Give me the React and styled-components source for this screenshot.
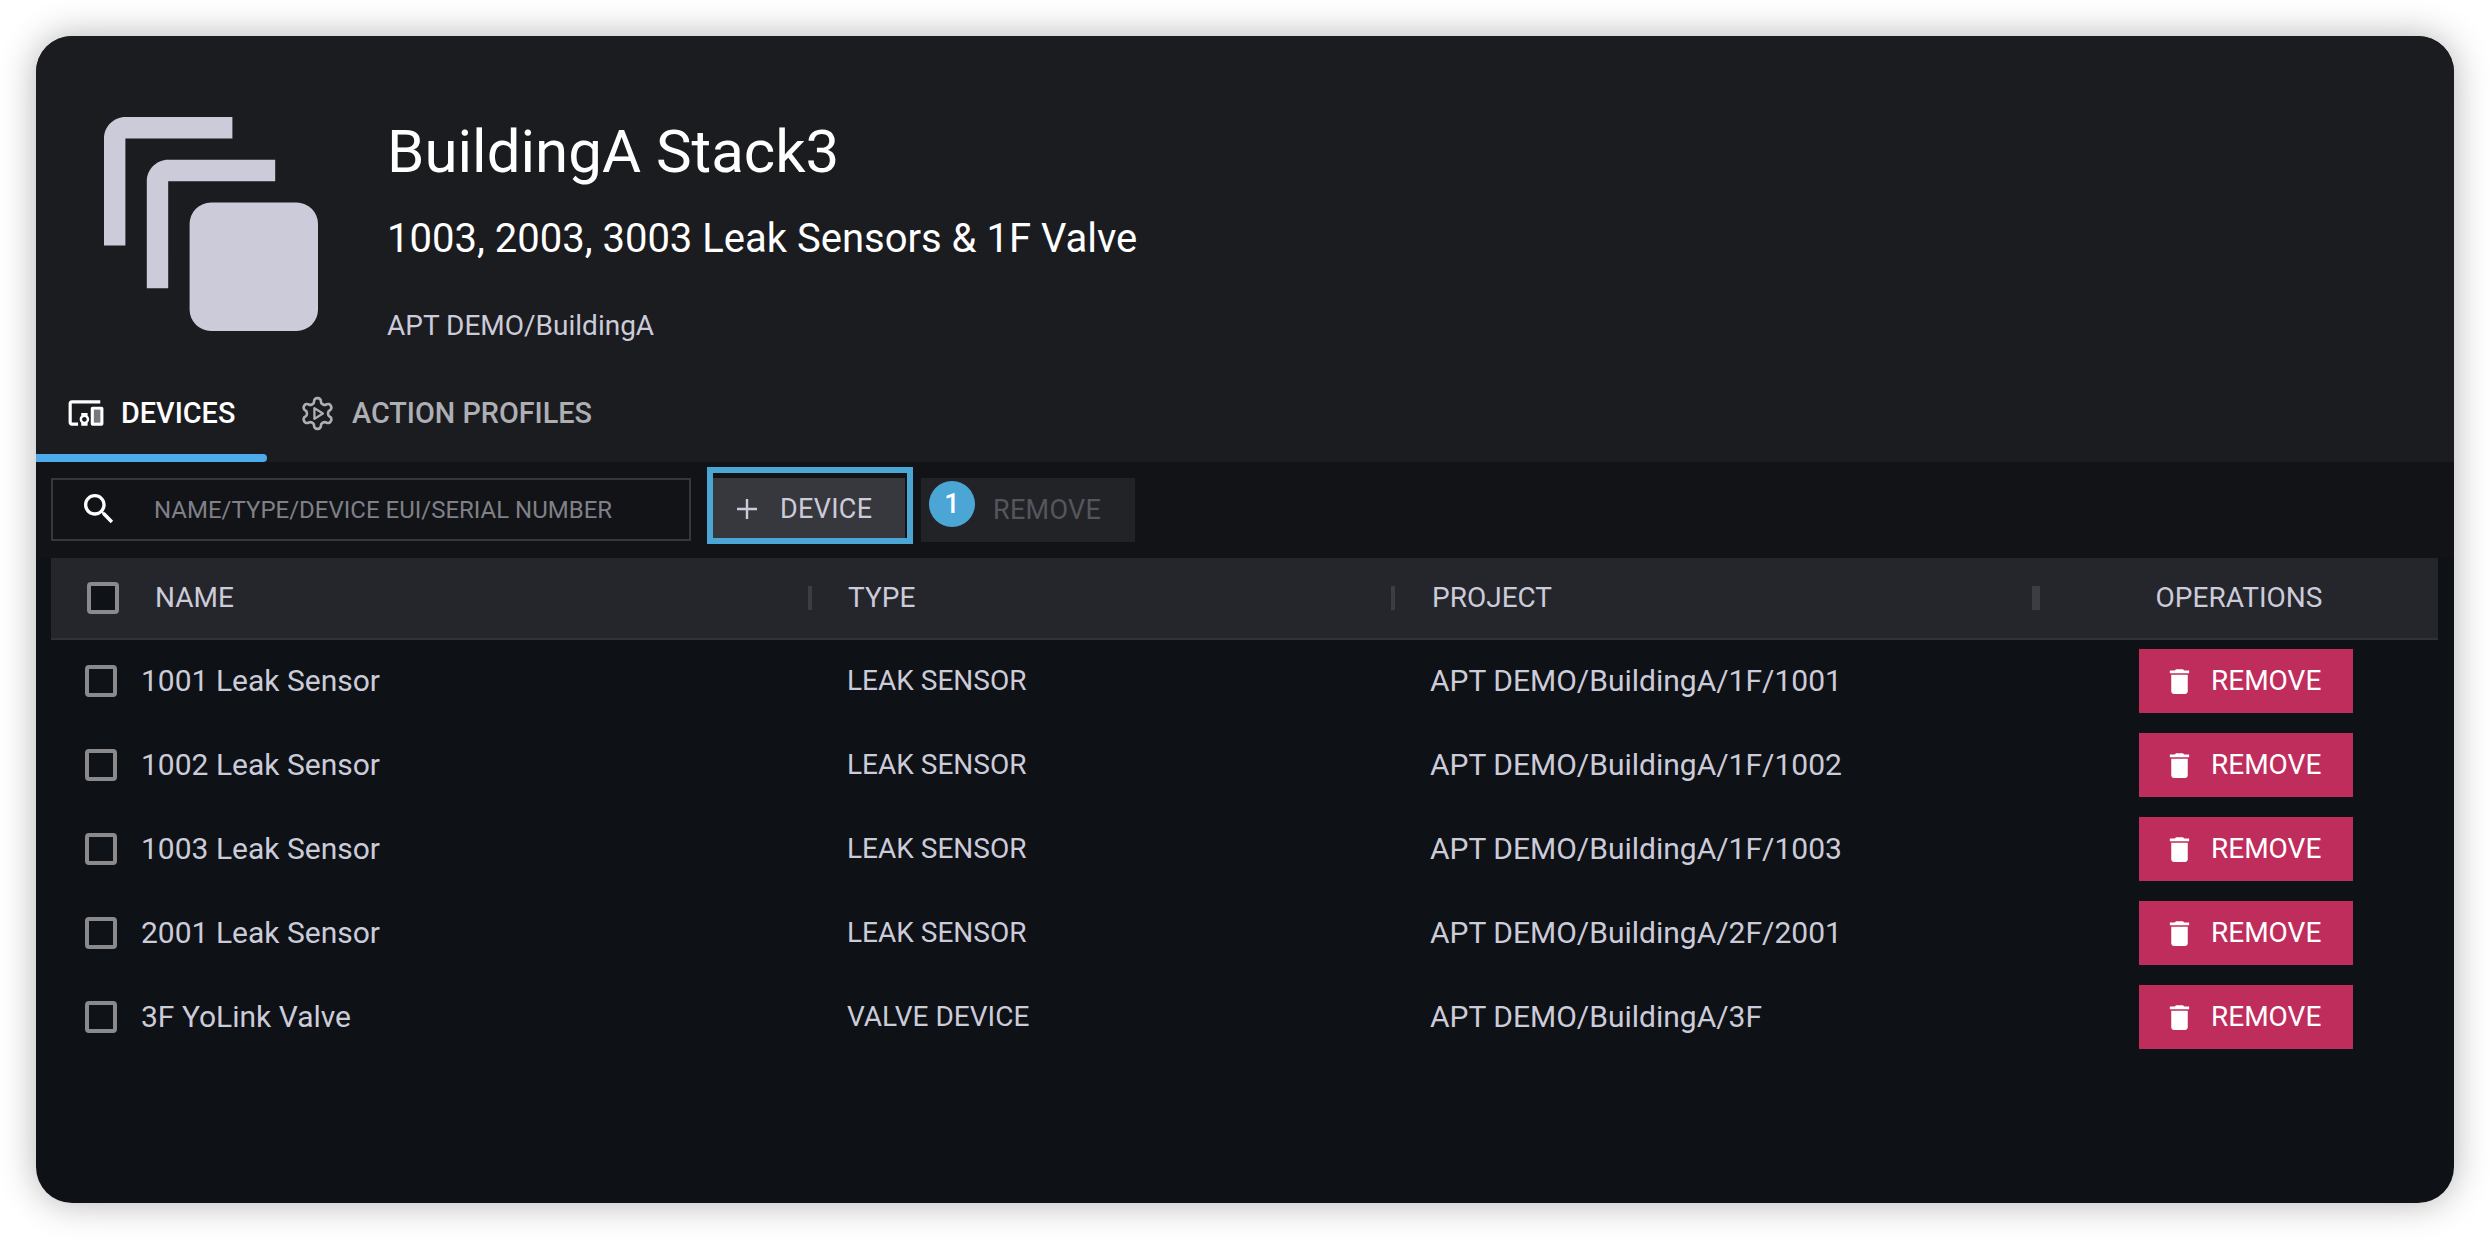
import React from "react";
import styled, { createGlobalStyle } from "styled-components";

const Global = createGlobalStyle`
  html, body { margin: 0; padding: 0; background: #fff; }
  body { font-family: Roboto, "Liberation Sans", sans-serif; }
  #root { width: 2490px; height: 1240px; overflow: hidden; }
  * { box-sizing: border-box; }
`;

const Page = styled.div`
  width: 2490px;
  height: 1240px;
  padding: 36px 36px 37px;
  background: #fff;
`;
const Card = styled.div`
  height: 1167px;
  border-radius: 36px;
  overflow: hidden;
  background: #0e1116;
  display: flex;
  flex-direction: column;
`;
const CardShadow = styled.div`
  border-radius: 36px;
  box-shadow: 0 0 36px rgba(0, 0, 0, 0.3);
`;
const Header = styled.header`
  height: 426px;
  background: #1b1c20;
  display: flex;
  flex-direction: column;
  justify-content: space-between;
`;
const Hero = styled.div`
  display: flex;
  align-items: flex-start;
  gap: 69px;
  padding: 80px 0 0 68px;
`;
const Logo = styled.svg`
  width: 214px;
  height: 214px;
  margin-top: 1px;
  flex: none;
  fill: #cccbda;
`;
const Info = styled.div`
  display: flex;
  flex-direction: column;
`;
const Title = styled.h1`
  margin: 1px 0 0;
  font-size: 60px;
  line-height: 70px;
  font-weight: 400;
  color: #fff;
`;
const Subtitle = styled.h2`
  margin: 28px 0 0;
  font-size: 40px;
  line-height: 48px;
  font-weight: 400;
  color: #fff;
`;
const Path = styled.div`
  margin-top: 45px;
  font-size: 28px;
  line-height: 36px;
  color: #cccbda;
`;
const Tabs = styled.nav`
  display: flex;
`;
const Tab = styled.div`
  position: relative;
  height: 98px;
  display: flex;
  align-items: center;
  gap: 16px;
  width: ${(p) => (p.$active ? "231px" : "auto")};
  padding: 0 32px 0 ${(p) => (p.$active ? 31 : 32)}px;
  font-size: 28.8px;
  font-weight: 500;
  color: ${(p) => (p.$active ? "#fff" : "#aeafb4")};
  &::after {
    content: "";
    display: ${(p) => (p.$active ? "block" : "none")};
    position: absolute;
    left: 0;
    right: 0;
    bottom: 0;
    height: 8px;
    background: #4dabec;
    border-radius: 0 4px 4px 0;
  }
`;
const TabIcon = styled.svg`
  width: ${(p) => p.$size}px;
  height: ${(p) => p.$size}px;
  flex: none;
`;
const Body = styled.main`
  flex: 1;
`;
const Toolbar = styled.div`
  display: flex;
  align-items: flex-start;
  height: 96px;
  padding: 16px 16px 16px 15px;
  background: #121317;
`;
const Search = styled.label`
  width: 640px;
  height: 63px;
  border: 2px solid #36373d;
  display: flex;
  align-items: center;
  padding-left: 26px;
  gap: 35px;
`;
const SearchIcon = styled.svg`
  width: 40px;
  height: 40px;
  flex: none;
  margin-top: -2px;
  fill: #fff;
`;
const SearchInput = styled.input`
  flex: 1;
  min-width: 0;
  border: 0;
  padding: 0;
  outline: 0;
  background: transparent;
  font-family: inherit;
  font-size: 24px;
  color: #cccbda;
  &::placeholder { color: #7f8088; opacity: 1; }
`;
const AddButton = styled.div`
  position: relative;
  width: 192px;
  height: 60px;
  margin-left: 22px;
  padding: 2px 0 0 24px;
  background: #37383e;
  color: #cccbda;
  font-size: 27px;
  display: flex;
  align-items: center;
  gap: 23px;
  letter-spacing: 0.3px;
`;
const FocusRing = styled.span`
  position: absolute;
  top: -11px;
  right: -8px;
  bottom: -6px;
  left: -6px;
  border: 6px solid #4ba6d6;
  pointer-events: none;
`;
const BulkRemove = styled.div`
  position: relative;
  width: 214px;
  height: 64px;
  margin-left: 16px;
  background: #222327;
  color: #55565c;
  font-size: 27px;
  display: flex;
  align-items: center;
  padding-left: 72px;
  letter-spacing: 0.3px;
`;
const Badge = styled.span`
  position: absolute;
  left: 8px;
  top: 3px;
  width: 46px;
  height: 46px;
  border-radius: 50%;
  background: #4ba6d6;
  color: #fff;
  font-size: 27px;
  font-weight: 500;
  display: flex;
  align-items: center;
  justify-content: center;
`;
const Table = styled.div`
  padding: 0 16px 0 15px;
`;
const Columns = `
  display: grid;
  grid-template-columns: 761px 583px 645px 398px;
`;
const HeadRow = styled.div`
  ${Columns}
  height: 82px;
  padding-bottom: 1px;
  background: #25262b;
  border-bottom: 2px solid #313238;
  font-size: 28px;
  font-weight: 400;
  color: #cccbda;
`;
const HeadCell = styled.div`
  position: relative;
  display: flex;
  align-items: center;
  padding-left: ${(p) => p.$pad}px;
  justify-content: ${(p) => (p.$center ? "center" : "flex-start")};
  ${(p) => p.$center && "padding-left: 0;"}
  &::after {
    content: "";
    display: ${(p) => (p.$sep ? "block" : "none")};
    position: absolute;
    right: 0;
    top: 28px;
    height: 24px;
    width: ${(p) => p.$sep}px;
    background: #3c3d41;
  }
`;
const Check = styled.span`
  flex: none;
  width: 32px;
  height: 32px;
  border: 4px solid #8a8a8c;
  border-radius: 4px;
  background: #0f1217;
  margin-right: ${(p) => p.$gap}px;
`;
const Rows = styled.div`
  margin-top: -1px;
`;
const Row = styled.div`
  ${Columns}
  height: 84px;
  align-items: center;
  color: #cccbda;
`;
const NameCell = styled.div`
  display: flex;
  align-items: center;
  padding-left: 34px;
  font-size: 30px;
`;
const CellText = styled.span`
  display: block;
  margin-bottom: 2px;
`;
const TypeCell = styled.div`
  padding-left: 35px;
  font-size: 28px;
`;
const ProjectCell = styled.div`
  padding-left: 35px;
  font-size: 30px;
`;
const OpsCell = styled.div`
  padding-left: 99px;
`;
const DangerButton = styled.div`
  width: 214px;
  height: 64px;
  background: #bf2d5d;
  color: #fff;
  font-size: 28px;
  font-weight: 400;
  display: flex;
  align-items: center;
  padding-left: 24px;
  gap: 15px;
`;
const TrashIcon = styled.svg`
  width: 33px;
  height: 33px;
  flex: none;
  fill: #fff;
`;
const PlusIcon = styled.svg`
  width: 20px;
  height: 20px;
  flex: none;
  stroke: #cccbda;
  stroke-width: 2.4;
`;

const rows = [
  ["1001 Leak Sensor", "LEAK SENSOR", "APT DEMO/BuildingA/1F/1001"],
  ["1002 Leak Sensor", "LEAK SENSOR", "APT DEMO/BuildingA/1F/1002"],
  ["1003 Leak Sensor", "LEAK SENSOR", "APT DEMO/BuildingA/1F/1003"],
  ["2001 Leak Sensor", "LEAK SENSOR", "APT DEMO/BuildingA/2F/2001"],
  ["3F YoLink Valve", "VALVE DEVICE", "APT DEMO/BuildingA/3F"],
];

export default function App() {
  return (
    <Page>
      <Global />
      <CardShadow>
        <Card>
          <Header>
            <Hero>
              <Logo viewBox="0 0 10 10">
                <path d="M6 0H1C.45 0 0 .45 0 1v5h1V1h5z" />
                <path d="M8 2H3c-.55 0-1 .45-1 1v5h1V3h5z" />
                <rect x="4" y="4" width="6" height="6" rx="1" />
              </Logo>
              <Info>
                <Title>BuildingA Stack3</Title>
                <Subtitle>1003, 2003, 3003 Leak Sensors &amp; 1F Valve</Subtitle>
                <Path>APT DEMO/BuildingA</Path>
              </Info>
            </Hero>
            <Tabs>
              <Tab $active>
                <TabIcon $size={38} viewBox="0 0 24 24" fill="#fff">
                  <rect x="17" y="10" width="4" height="8" fill="#77777c" />
                  <path d="M3 6h18V4H3c-1.1 0-2 .9-2 2v12c0 1.1.9 2 2 2h4v-2H3V6zm10 6H9v1.78c-.61.55-1 1.33-1 2.22 0 .89.39 1.67 1 2.22V20h4v-1.78c.61-.55 1-1.34 1-2.22 0-.88-.39-1.67-1-2.22V12zm-2 5.5c-.83 0-1.5-.67-1.5-1.5s.67-1.5 1.5-1.5 1.5.67 1.5 1.5-.67 1.5-1.5 1.5zM22 8h-6c-.5 0-1 .5-1 1v10c0 .5.5 1 1 1h6c.5 0 1-.5 1-1V9c0-.5-.5-1-1-1zm-1 10h-4v-8h4v8z" />
                </TabIcon>
                DEVICES
              </Tab>
              <Tab>
                <TabIcon $size={37} viewBox="0 0 24 24" fill="none" stroke="#aeafb4" strokeWidth="1.7" strokeLinejoin="round">
                  <path d="M12.22 2h-.44a2 2 0 0 0-2 2v.18a2 2 0 0 1-1 1.73l-.43.25a2 2 0 0 1-2 0l-.15-.08a2 2 0 0 0-2.73.73l-.22.38a2 2 0 0 0 .73 2.73l.15.1a2 2 0 0 1 1 1.72v.51a2 2 0 0 1-1 1.74l-.15.09a2 2 0 0 0-.73 2.73l.22.38a2 2 0 0 0 2.73.73l.15-.08a2 2 0 0 1 2 0l.43.25a2 2 0 0 1 1 1.73V20a2 2 0 0 0 2 2h.44a2 2 0 0 0 2-2v-.18a2 2 0 0 1 1-1.73l.43-.25a2 2 0 0 1 2 0l.15.08a2 2 0 0 0 2.73-.73l.22-.39a2 2 0 0 0-.73-2.73l-.15-.08a2 2 0 0 1-1-1.74v-.5a2 2 0 0 1 1-1.74l.15-.09a2 2 0 0 0 .73-2.73l-.22-.38a2 2 0 0 0-2.73-.73l-.15.08a2 2 0 0 1-2 0l-.43-.25a2 2 0 0 1-1-1.73V4a2 2 0 0 0-2-2z" />
                  <path d="M10 8.5v7l5.5-3.5z" strokeWidth="1.5" />
                </TabIcon>
                ACTION PROFILES
              </Tab>
            </Tabs>
          </Header>
          <Body>
            <Toolbar>
              <Search>
                <SearchIcon viewBox="0 0 24 24">
                  <path d="M15.5 14h-.79l-.28-.27C15.41 12.59 16 11.11 16 9.5 16 5.91 13.09 3 9.5 3S3 5.91 3 9.5 5.91 16 9.5 16c1.61 0 3.09-.59 4.23-1.57l.27.28v.79l5 4.99L20.49 19l-4.99-5zm-6 0C7.01 14 5 11.99 5 9.5S7.01 5 9.5 5 14 7.01 14 9.5 11.99 14 9.5 14z" />
                </SearchIcon>
                <SearchInput placeholder="NAME/TYPE/DEVICE EUI/SERIAL NUMBER" />
              </Search>
              <AddButton>
                <PlusIcon viewBox="0 0 20 20">
                  <path d="M10 0v20M0 10h20" />
                </PlusIcon>
                DEVICE
                <FocusRing />
              </AddButton>
              <BulkRemove>
                <Badge>1</Badge>
                REMOVE
              </BulkRemove>
            </Toolbar>
            <Table>
              <HeadRow>
                <HeadCell $pad={36} $sep={4}>
                  <Check $gap={36} />
                  NAME
                </HeadCell>
                <HeadCell $pad={36} $sep={4}>TYPE</HeadCell>
                <HeadCell $pad={37} $sep={8}>PROJECT</HeadCell>
                <HeadCell $center>OPERATIONS</HeadCell>
              </HeadRow>
              <Rows>
                {rows.map(([name, type, project]) => (
                  <Row key={name}>
                    <NameCell>
                      <Check $gap={24} />
                      <CellText>{name}</CellText>
                    </NameCell>
                    <TypeCell>
                      <CellText>{type}</CellText>
                    </TypeCell>
                    <ProjectCell>
                      <CellText>{project}</CellText>
                    </ProjectCell>
                    <OpsCell>
                      <DangerButton>
                        <TrashIcon viewBox="0 0 24 24">
                          <path d="M6 19c0 1.1.9 2 2 2h8c1.1 0 2-.9 2-2V7H6v12zM19 4h-3.5l-1-1h-5l-1 1H5v2h14V4z" />
                        </TrashIcon>
                        <CellText>REMOVE</CellText>
                      </DangerButton>
                    </OpsCell>
                  </Row>
                ))}
              </Rows>
            </Table>
          </Body>
        </Card>
      </CardShadow>
    </Page>
  );
}
